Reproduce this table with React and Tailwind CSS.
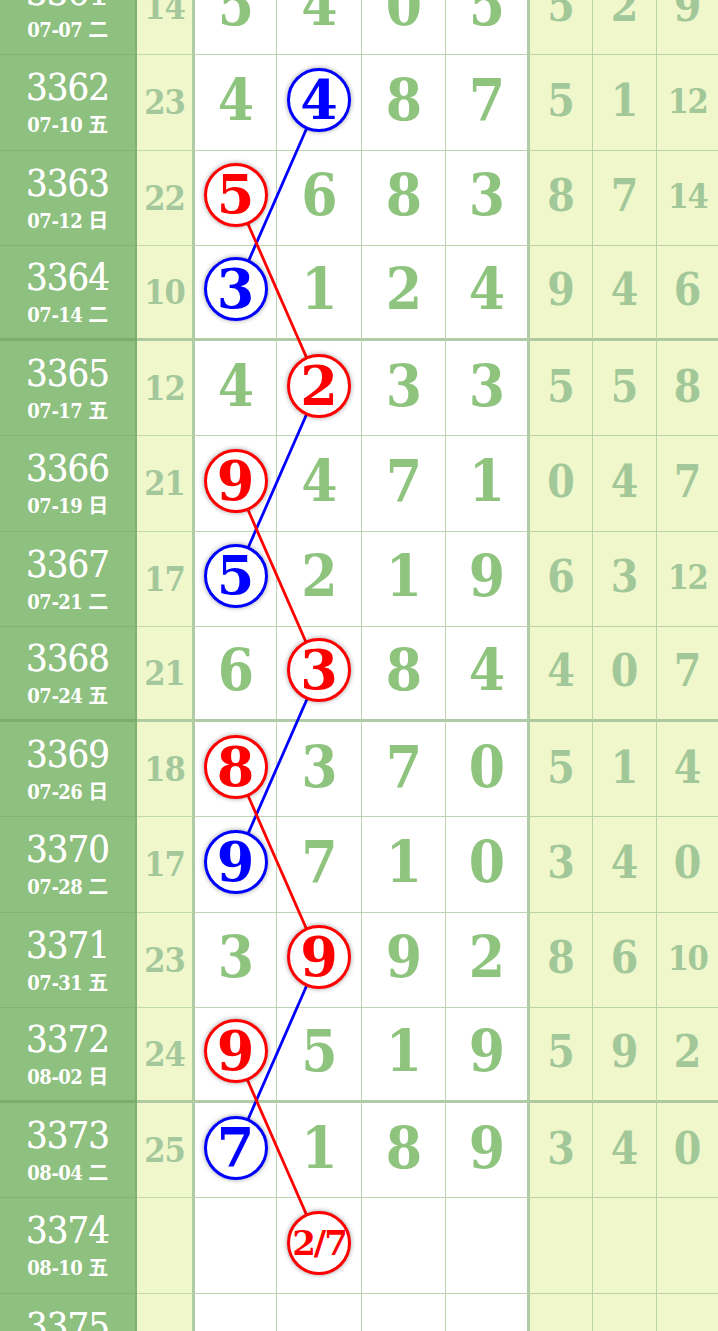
import React from 'react';
import clsx from 'clsx';

const ROW_H = 95.25;

// [issue, date, sum, main digits, right digits]
const rows = [
  ['3361', '07-07 二', '14', ['5', '4', '0', '5'], ['5', '2', '9']],
  ['3362', '07-10 五', '23', ['4', '4', '8', '7'], ['5', '1', '12']],
  ['3363', '07-12 日', '22', ['5', '6', '8', '3'], ['8', '7', '14']],
  ['3364', '07-14 二', '10', ['3', '1', '2', '4'], ['9', '4', '6']],
  ['3365', '07-17 五', '12', ['4', '2', '3', '3'], ['5', '5', '8']],
  ['3366', '07-19 日', '21', ['9', '4', '7', '1'], ['0', '4', '7']],
  ['3367', '07-21 二', '17', ['5', '2', '1', '9'], ['6', '3', '12']],
  ['3368', '07-24 五', '21', ['6', '3', '8', '4'], ['4', '0', '7']],
  ['3369', '07-26 日', '18', ['8', '3', '7', '0'], ['5', '1', '4']],
  ['3370', '07-28 二', '17', ['9', '7', '1', '0'], ['3', '4', '0']],
  ['3371', '07-31 五', '23', ['3', '9', '9', '2'], ['8', '6', '10']],
  ['3372', '08-02 日', '24', ['9', '5', '1', '9'], ['5', '9', '2']],
  ['3373', '08-04 二', '25', ['7', '1', '8', '9'], ['3', '4', '0']],
  ['3374', '08-10 五', '', ['', '2/7', '', ''], ['', '', '']],
  ['3375', '08-12 日', '', ['', '', '', ''], ['', '', '']],
];

// circled cells: row index -> [col, colour]
const marks = {
  1: [1, 'blue'],
  2: [0, 'red'],
  3: [0, 'blue'],
  4: [1, 'red'],
  5: [0, 'red'],
  6: [0, 'blue'],
  7: [1, 'red'],
  8: [0, 'red'],
  9: [0, 'blue'],
  10: [1, 'red'],
  11: [0, 'red'],
  12: [0, 'blue'],
  13: [1, 'red'],
};

const links = [
  [1, 3, '#0000ff'],
  [4, 6, '#0000ff'],
  [7, 9, '#0000ff'],
  [10, 12, '#0000ff'],
  [2, 4, '#ff0000'],
  [5, 7, '#ff0000'],
  [8, 10, '#ff0000'],
  [11, 13, '#ff0000'],
];

const colX = [235.5, 319];
const mainW = ['w-[82px]', 'w-[85px]', 'w-[84px]', 'w-[84px]'];
const rightW = ['w-[63px]', 'w-[64px]', 'w-[61px]'];

const Circle = ({ value, color }) => (
  <div
    className={clsx(
      'relative z-[2] flex h-[64px] w-[64px] items-center justify-center rounded-full border-[3px] bg-white font-bold leading-none shadow-[0_0_5px_rgba(0,0,0,0.4)]',
      color === 'red' ? 'border-[#ff0000] text-[#ff0000]' : 'border-[#0000ff] text-[#0000ff]',
      value.length > 1 ? 'text-[34px] tracking-[-2px]' : 'text-[54px]'
    )}
  >
    {value}
  </div>
);

const Row = ({ row, index }) => {
  const [issue, date, sum, main, right] = row;
  const thick = (index - 3) % 4 === 0;
  const mark = marks[index];
  const bb = thick ? 'border-b-[3px]' : 'border-b';

  return (
    <div className="flex h-[95.25px]">
      <div className={clsx('flex w-[137px] flex-col items-center justify-center gap-[10px] border-r-2 border-r-[#7eb16e] bg-[#8ec07f] text-white', bb, thick ? 'border-b-[#7cad6c]' : 'border-b-[#82b572]')}>
        <div className="font-stretch-condensed text-[38px] leading-[36px] tracking-[-1px] [text-shadow:0_0_0.6px_#fff]">{issue}</div>
        <div className="font-stretch-condensed text-[20px] font-bold leading-[20px] tracking-[-0.5px]">{date}</div>
      </div>
      <div className={clsx('flex w-[58px] items-center justify-center border-r-[3px] border-r-[#b0cca4] bg-[#eff7cb] font-bold text-[#a4c89b] font-stretch-condensed text-[34px] leading-none tracking-[-1px]', bb, thick ? 'border-b-[#b0cba1]' : 'border-b-[#c3d8ae]')}>
        {sum}
      </div>
      {main.map((d, c) => (
        <div
          key={c}
          className={clsx(
            'flex items-center justify-center bg-white pb-[5px] font-bold leading-none text-[#8fc47f]',
            mainW[c],
            bb,
            thick ? 'border-b-[#b0cba6]' : 'border-b-[#bdd4b3]',
            c === 3 ? 'border-r-[3px] border-r-[#b0cca4]' : 'border-r border-r-[#bdd4b3]'
          )}
        >
          {mark && mark[0] === c ? (
            <Circle value={d} color={mark[1]} />
          ) : d === '2/7' ? (
            <Circle value={d} color="red" />
          ) : (
            <span className="font-stretch-condensed text-[58px] tracking-[-1px]">{d}</span>
          )}
        </div>
      ))}
      {right.map((d, c) => (
        <div
          key={c}
          className={clsx(
            'flex items-center justify-center bg-[#eff7cb] pb-[3px] font-bold leading-none text-[#a2c798] font-stretch-condensed',
            rightW[c],
            bb,
            thick ? 'border-b-[#aec89f]' : 'border-b-[#bcd2a8]',
            c < 2 && 'border-r border-r-[#bcd2a8]',
            d.length > 1 ? 'text-[34px] tracking-[-1.5px]' : 'text-[44px]'
          )}
        >
          {d}
        </div>
      ))}
    </div>
  );
};

export default function App() {
  return (
    <div className="h-[1331px] w-[718px] overflow-hidden bg-white font-['DejaVu_Serif','Noto_Sans_CJK_SC',serif]">
      <div className="relative mt-[-40px]">
        {rows.map((row, i) => (
          <Row key={row[0]} row={row} index={i} />
        ))}
        <svg className="pointer-events-none absolute left-0 top-0 z-[1] h-full w-full">
          {links.map(([a, b, color], i) => {
            const ca = marks[a][0];
            const cb = marks[b][0];
            const ya = a * ROW_H + 45;
            const yb = b * ROW_H + 45;
            return <line key={i} x1={colX[ca]} y1={ya} x2={colX[cb]} y2={yb} stroke={color} strokeWidth="2.8" />;
          })}
        </svg>
      </div>
    </div>
  );
}
